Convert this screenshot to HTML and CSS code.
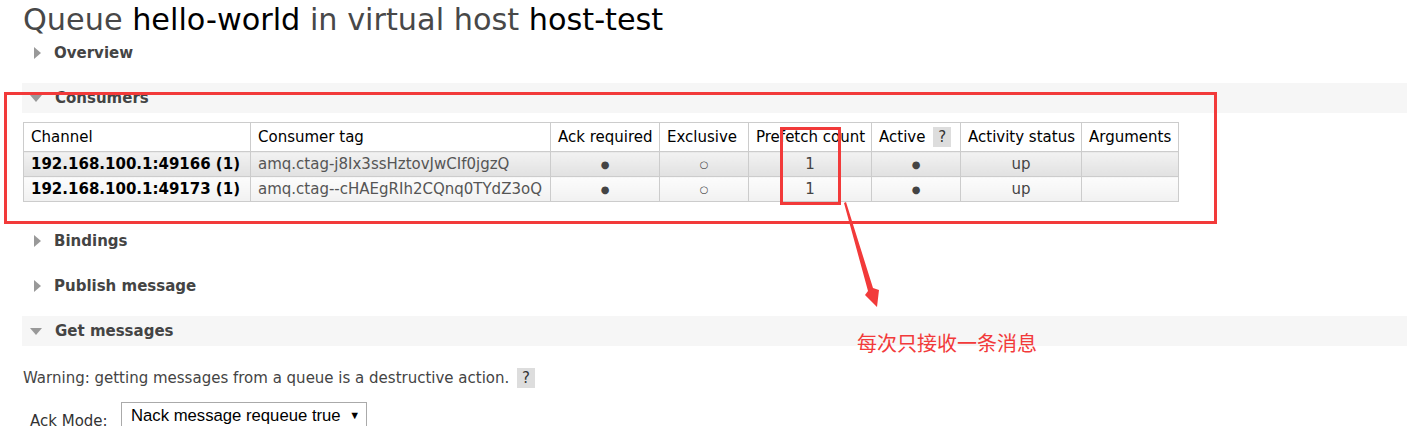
FILE: index.html
```html
<!DOCTYPE html>
<html>
    <head>
        <title>Queue hello-world</title>
        <link rel="stylesheet" href="styles.css">
    </head>
    <body>
        <div class="page">
            <h1>Queue <b>hello-world</b> in virtual host <b>host-test</b></h1>

            <div class="section first">
                <h2 class="closed"><span class="tri"></span>Overview</h2>
            </div>

            <div class="section open">
                <h2><span class="tri"></span>Consumers</h2>
                <table class="list">
                    <thead>
                        <tr>
                            <th class="c1">Channel</th>
                            <th class="c2">Consumer tag</th>
                            <th class="c3">Ack required</th>
                            <th class="c4">Exclusive</th>
                            <th class="c5">Prefetch count</th>
                            <th class="c6">Active <span class="help">?</span></th>
                            <th class="c7">Activity status</th>
                            <th class="c8">Arguments</th>
                        </tr>
                    </thead>
                    <tbody>
                        <tr class="alt1">
                            <td><b>192.168.100.1:49166 (1)</b></td>
                            <td class="tag">amq.ctag-j8Ix3ssHztovJwCIf0jgzQ</td>
                            <td class="c dot">&#9679;</td>
                            <td class="c dot">&#9675;</td>
                            <td class="c">1</td>
                            <td class="c dot">&#9679;</td>
                            <td class="c">up</td>
                            <td></td>
                        </tr>
                        <tr class="alt2">
                            <td><b>192.168.100.1:49173 (1)</b></td>
                            <td class="tag">amq.ctag--cHAEgRIh2CQnq0TYdZ3oQ</td>
                            <td class="c dot">&#9679;</td>
                            <td class="c dot">&#9675;</td>
                            <td class="c">1</td>
                            <td class="c dot">&#9679;</td>
                            <td class="c">up</td>
                            <td></td>
                        </tr>
                    </tbody>
                </table>
            </div>

            <div class="section">
                <h2 class="closed"><span class="tri"></span>Bindings</h2>
            </div>

            <div class="section">
                <h2 class="closed"><span class="tri"></span>Publish message</h2>
            </div>

            <div class="section open">
                <h2><span class="tri"></span>Get messages</h2>
                <p class="warn">Warning: getting messages from a queue is a destructive action. <span class="help">?</span></p>
                <div class="field">
                    <label>Ack Mode:</label>
                    <div class="select">Nack message requeue true <span class="caret">&#9660;</span></div>
                </div>
            </div>
        </div>

        <!-- annotations drawn over the page -->
        <div class="mark big"></div>
        <div class="mark small"></div>
        <svg class="arrow" width="60" height="120" viewBox="0 0 60 120">
            <polygon points="3,1 5,0 32,86 38,88 36,105 24,93 27,89" fill="#f23a3a"/>
        </svg>
        <div class="note">每次只接收一条消息</div>
    </body>
</html>
```

FILE: styles.css
```css
body {
    margin: 0;
    font-family: "DejaVu Sans", Verdana, sans-serif;
    font-size: 15px;
    color: #444;
    background: #fff;
    overflow: hidden;
}

.page {
    padding-left: 22px;
}

h1 {
    margin: 0;
    padding: 1px 0 0 1px;
    font-size: 30.3px;
    font-weight: normal;
    color: #484848;
    line-height: 37px;
}
h1 b {
    font-weight: normal;
    color: #000;
}

h2 {
    margin: 0;
    height: 30px;
    display: flex;
    align-items: center;
    font-size: 15px;
    font-weight: bold;
    color: #444;
}
.section {
    margin-top: 15px;
}
.section.first {
    margin-top: 0;
}
.open > h2 {
    background: #f6f6f6;
}

.tri {
    display: inline-block;
    width: 0;
    height: 0;
    margin: 0 13px 0 12px;
}
.closed .tri {
    border-top: 6px solid transparent;
    border-bottom: 6px solid transparent;
    border-left: 7px solid #999;
}
.open .tri {
    border-left: 6px solid transparent;
    border-right: 6px solid transparent;
    border-top: 7px solid #999;
    margin-left: 8px;
    margin-right: 13px;
}

table.list {
    border-collapse: collapse;
    table-layout: fixed;
    width: 1155px;
    margin: 9px 0 24px 1px;
    font-size: 15px;
}
table.list th, table.list td {
    border: 1px solid #ccc;
    padding: 0 7px;
    text-align: left;
    white-space: nowrap;
}
table.list th {
    height: 28px;
    font-weight: normal;
    color: #000;
    background: #fff;
}
table.list td {
    height: 24px;
}
table.list td b {
    color: #000;
}
td.c {
    text-align: center !important;
}
td.dot {
    font-size: 10px;
}
td.tag {
    color: #555;
}
tr.alt1 td {
    background: linear-gradient(#f2f2f2, #e1e1e1);
}
tr.alt2 td {
    background: linear-gradient(#fcfcfc, #f1f1f1);
}
.c1 { width: 212px; }
.c2 { width: 285px; }
.c3 { width: 94px; }
.c4 { width: 74px; }
.c5 { width: 108px; }
.c6 { width: 74px; }
.c7 { width: 106px; }
.c8 { width: 82px; }

.help {
    display: inline-block;
    background: #ddd;
    color: #333;
    padding: 1px 5px;
    margin-left: 3px;
}

.warn {
    margin: 22px 0 0 1px;
}

.field {
    display: flex;
    align-items: flex-start;
    margin-top: 14px;
}
.field label {
    width: 91px;
    padding: 10px 0 0 8px;
    color: #333;
}
.select {
    width: 246px;
    height: 30px;
    border: 1px solid #aaa;
    padding: 3px 0 0 9px;
    box-sizing: border-box;
    font-family: "Liberation Sans", Arial, sans-serif;
    font-size: 16.7px;
    color: #000;
    white-space: nowrap;
}
.caret {
    font-size: 11px;
    margin-left: 4px;
    vertical-align: 2px;
}

.mark {
    position: absolute;
    border: 3px solid #f23a3a;
}
.mark.big {
    left: 4px;
    top: 92px;
    width: 1207px;
    height: 126px;
}
.mark.small {
    left: 780px;
    top: 127px;
    width: 55px;
    height: 72px;
}
.arrow {
    position: absolute;
    left: 841px;
    top: 202px;
}
.note {
    position: absolute;
    left: 857px;
    top: 328px;
    font-family: "Noto Sans CJK SC", sans-serif;
    font-size: 20px;
    color: #f23a3a;
}
```
